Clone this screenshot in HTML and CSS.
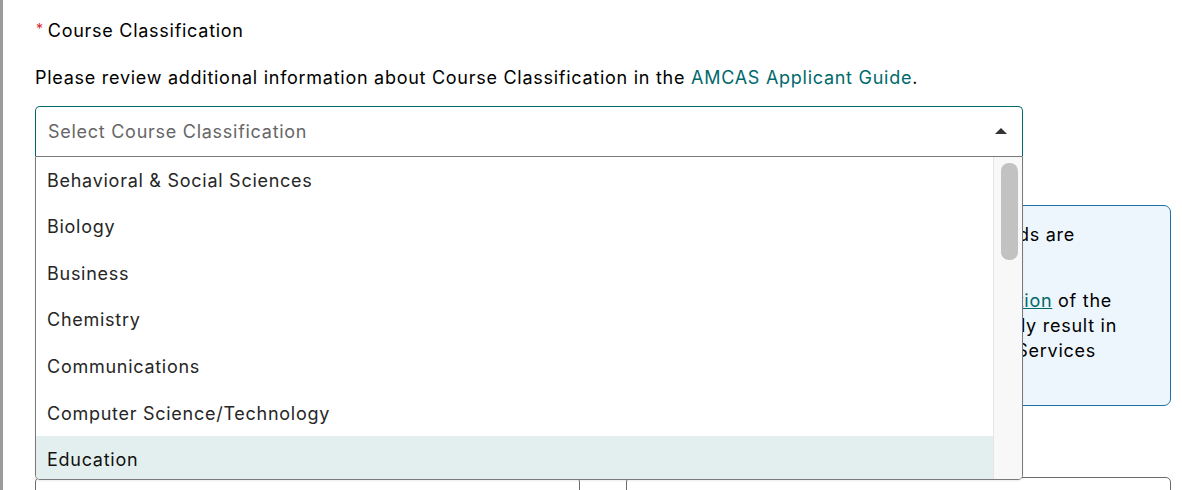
FILE: index.html
```html
<!DOCTYPE html>
<html lang="en">
<head>
<meta charset="utf-8">
<title>Course Classification</title>
<link rel="stylesheet" href="styles.css">
</head>
<body>
<div class="page">
  <div class="field-label"><span class="req">*</span>Course Classification</div>
  <p class="help">Please review additional information about Course Classification in the <a class="link" href="#">AMCAS Applicant Guide</a>.</p>

  <div class="select-wrap">
    <div class="select">
      <span class="placeholder">Select Course Classification</span>
      <span class="caret"></span>
    </div>
    <div class="menu">
      <ul class="options">
        <li class="option">Behavioral &amp; Social Sciences</li>
        <li class="option">Biology</li>
        <li class="option">Business</li>
        <li class="option">Chemistry</li>
        <li class="option">Communications</li>
        <li class="option">Computer Science/Technology</li>
        <li class="option active">Education</li>
      </ul>
      <div class="track"><div class="thumb"></div></div>
    </div>
  </div>

  <div class="info">
    <p class="info-p">
      <span class="ln ln-1">Course Classification, Type and Credit Hours fields are</span>
      <span class="ln ln-2">required for each course.</span>
    </p>
    <p class="info-p">
      <span class="ln ln-3">Select the best match using the <a class="ulink" href="#">classification</a> of the</span>
      <span class="ln ln-4">course. Misclassification may ultimately result in</span>
      <span class="ln ln-5">delays in review by Verification Services</span>
      <span class="ln ln-6">staff.</span>
    </p>
  </div>

  <div class="row">
    <div class="box"></div>
    <div class="box"></div>
  </div>
</div>
</body>
</html>
```

FILE: styles.css
```css
* { box-sizing: border-box; }
html, body { margin: 0; padding: 0; background: #ffffff; }
body {
  font-family: "Inter", "Roboto", sans-serif;
  font-size: 18px;
  font-weight: 400;
  letter-spacing: 0.73px;
  color: #111111;
}
.page {
  border-left: 3px solid #9b9b9b;
  min-height: 490px;
  padding: 19px 11px 0 32px;
}
.field-label {
  line-height: 24px;
  height: 24px;
  display: flex;
  align-items: center;
  color: #000000;
}
.req {
  color: #d9262e;
  font-size: 14px;
  margin: 0 4px 0 1px;
  position: relative;
  top: -2px;
}
.help {
  margin: 23px 0 0 0;
  line-height: 24px;
  color: #000000;
}
.link { color: #00696b; text-decoration: none; }
.select-wrap {
  position: relative;
  width: 988px;
  margin-top: 16px;
}
.select {
  height: 50px;
  border: 1px solid #00696b;
  border-bottom: none;
  border-radius: 5px 5px 0 0;
  display: flex;
  align-items: center;
  justify-content: space-between;
  padding: 0 15px 0 12px;
}
.placeholder { color: #666666; }
.caret {
  width: 0; height: 0;
  border-left: 6px solid transparent;
  border-right: 6px solid transparent;
  border-bottom: 6px solid #333333;
  margin-top: -2px;
}
.menu {
  position: absolute;
  left: 0; right: 0;
  top: 100%;
  height: 324px;
  border: 1px solid #7a7a7a;
  border-radius: 0 0 5px 5px;
  background: #ffffff;
  display: flex;
  overflow: hidden;
  z-index: 2;
  box-shadow: 0 1px 2px rgba(0,0,0,0.08);
}
.options {
  list-style: none;
  margin: 0; padding: 0;
  flex: 1;
  overflow: hidden;
}
.option {
  height: 46.55px;
  display: flex;
  align-items: center;
  padding: 0 11px;
  color: #262626;
}
.option.active { background: #e3efee; color: #111111; }
.track {
  width: 29px;
  background: #f8f8f8;
  border-left: 1px solid #e6e6e6;
  padding: 6px 4px 0 7px;
}
.thumb {
  height: 97px;
  background: #c2c2c2;
  border-radius: 8px;
}
.info {
  margin-top: 49px;
  height: 201px;
  border: 1px solid #1a72a5;
  border-radius: 7px;
  background: #eef6fd;
  padding: 16px 20px;
  color: #000000;
}
.info-p { margin: 0; line-height: 25px; }
.info-p + .info-p { margin-top: 16px; }
.ln { display: block; white-space: nowrap; text-align: right; }
.ln-1 { padding-right: 75px; }
.ln-2 { padding-right: 420px; }
.ln-3 { padding-right: 38px; }
.ln-4 { padding-right: 33px; }
.ln-5 { padding-right: 54px; }
.ln-6 { padding-right: 600px; }
.ulink { color: #00696b; text-decoration: underline; }
.row {
  margin-top: 71px;
  display: grid;
  grid-template-columns: 1fr 1fr;
  gap: 46px;
}
.box {
  height: 50px;
  border: 1px solid #6b6b6b;
  border-radius: 5px;
}
```
